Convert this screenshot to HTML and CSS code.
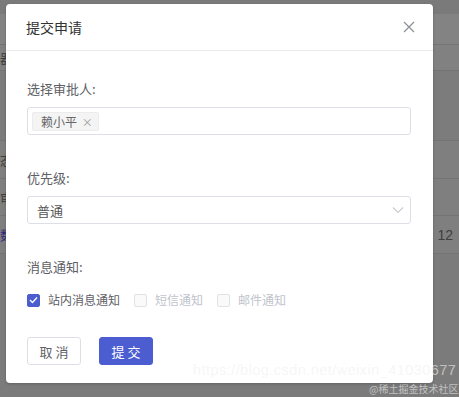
FILE: index.html
```html
<!DOCTYPE html>
<html lang="zh-CN">
<head>
<meta charset="UTF-8">
<title>提交申请</title>
<link rel="stylesheet" href="styles.css">
</head>
<body>
<div class="backdrop">
    <div class="row top"></div>
    <div class="row r1"></div>
    <div class="row r2"><span class="cell-l">器</span></div>
    <div class="row r3"></div>
    <div class="row r4"><span class="cell-l">态</span></div>
    <div class="row r5"><span class="cell-l">审</span></div>
    <div class="row r6"><span class="cell-l link">数</span><span class="cell-r">12</span></div>
    <div class="row rest"></div>
</div>

<div class="dialog">
    <div class="dialog-header">
        <span class="dialog-title">提交申请</span>
        <svg class="close" width="12" height="12" viewBox="0 0 12 12">
            <path d="M1 1 L11 11 M11 1 L1 11" stroke="#8c8f96" stroke-width="1.2" fill="none"/>
        </svg>
    </div>
    <div class="dialog-body">
        <div class="label">选择审批人:</div>
        <div class="input tags">
            <span class="tag">赖小平 <span class="tag-x">×</span></span>
        </div>

        <div class="label gap">优先级:</div>
        <div class="input select">
            <span>普通</span>
            <svg width="12" height="8" viewBox="0 0 12 8">
                <path d="M1 1.5 L6 6.5 L11 1.5" stroke="#c8cad0" stroke-width="1.1" fill="none"/>
            </svg>
        </div>

        <div class="label gap">消息通知:</div>
        <div class="checks">
            <label class="check on">
                <span class="box">
                    <svg width="9" height="8" viewBox="0 0 9 8"><path d="M1 4 L3.5 6.5 L8 1.5" stroke="#fff" stroke-width="1.3" fill="none"/></svg>
                </span>
                站内消息通知
            </label>
            <label class="check"><span class="box"></span>短信通知</label>
            <label class="check"><span class="box"></span>邮件通知</label>
        </div>

        <div class="actions">
            <button class="btn">取 消</button>
            <button class="btn primary">提 交</button>
        </div>
    </div>
</div>

<div class="watermark">https://blog.csdn.net/weixin_41030677</div>
<div class="watermark-2">@稀土掘金技术社区</div>
</body>
</html>
```

FILE: styles.css
```css
body {
    margin: 0;
    width: 459px;
    height: 397px;
    overflow: hidden;
    position: relative;
    background: #7e7e7e;
    font-family: "Noto Sans CJK SC", "Noto Sans", sans-serif;
}

.backdrop {
    display: flex;
    flex-direction: column;
    height: 397px;
}

.row {
    display: flex;
    align-items: center;
    justify-content: space-between;
    border-bottom: 1px solid #747474;
    font-size: 13px;
    color: #3c3c3c;
}

.row.top { height: 14px; background: #7a7a7a; border: none; }
.row.r1 { height: 30px; background: #838383; }
.row.r2 { height: 25px; background: #818181; }
.row.r3 { height: 69px; background: #7c7c7c; }
.row.r4 { height: 37px; background: #7f7f7f; }
.row.r5 { height: 36px; background: #7f7f7f; }
.row.r6 { height: 37px; background: #7f7f7f; }
.row.rest { flex: 1; border: none; background: #7b7b7b; }

.cell-l {
    margin-left: 0;
}

.cell-l.link {
    color: #2f2a78;
}

.cell-r {
    margin-right: 6px;
    color: #404040;
    font-family: "Liberation Sans", sans-serif;
    font-size: 14px;
}

.dialog {
    position: absolute;
    left: 6px;
    top: 4px;
    width: 427px;
    height: 379px;
    background: #fff;
    border-radius: 4px;
    box-shadow: 0 1px 3px rgba(0, 0, 0, 0.2);
}

.dialog-header {
    height: 46px;
    padding: 0 20px;
    display: flex;
    align-items: center;
    justify-content: space-between;
    border-bottom: 1px solid #ebebeb;
}

.dialog-title {
    font-size: 14px;
    color: #303133;
}

.close {
    margin-right: -2px;
}

.dialog-body {
    padding: 28px 22px 0 21px;
}

.label {
    font-size: 13px;
    line-height: 20px;
    color: #5e6066;
    margin-bottom: 8px;
}

.label.gap {
    margin-top: 33px;
}

.input {
    height: 28px;
    box-sizing: border-box;
    border: 1px solid #dcdfe6;
    border-radius: 3px;
    display: flex;
    align-items: center;
}

.tags {
    padding-left: 4px;
}

.tag {
    height: 17px;
    padding: 0 5px 0 8px;
    background: #f4f4f5;
    border: 1px solid #ececee;
    border-radius: 2px;
    font-size: 12px;
    line-height: 17px;
    color: #666;
}

.tag-x {
    color: #999;
    font-size: 11px;
    margin-left: 2px;
}

.select {
    justify-content: space-between;
    padding: 0 6px 0 9px;
    font-size: 13px;
    color: #555;
}

.checks {
    display: flex;
    gap: 14px;
    margin-top: 13px;
}

.check {
    display: flex;
    align-items: center;
    gap: 8px;
    font-size: 12px;
    line-height: 20px;
    color: #c0c4cc;
}

.check.on {
    color: #5e6066;
}

.box {
    width: 13px;
    height: 13px;
    box-sizing: border-box;
    border: 1px solid #e0e2e6;
    border-radius: 2px;
    background: #fafafa;
    display: flex;
    align-items: center;
    justify-content: center;
}

.check.on .box {
    background: #4c5dd0;
    border-color: #4c5dd0;
}

.actions {
    display: flex;
    gap: 18px;
    margin-top: 27px;
}

.btn {
    width: 54px;
    height: 28px;
    border: 1px solid #dcdfe6;
    border-radius: 3px;
    background: #fff;
    color: #606266;
    font-family: inherit;
    font-size: 13px;
    padding: 0;
}

.btn.primary {
    background: #4b5dd1;
    border-color: #4b5dd1;
    color: #fff;
}

.watermark {
    position: absolute;
    left: 193px;
    top: 362px;
    font-family: "Liberation Sans", sans-serif;
    font-size: 14.5px;
    color: rgba(240, 240, 240, 0.6);
    letter-spacing: 0.45px;
}

.watermark-2 {
    position: absolute;
    left: 369px;
    top: 381px;
    font-size: 10px;
    color: rgba(225, 225, 225, 0.7);
}
```
